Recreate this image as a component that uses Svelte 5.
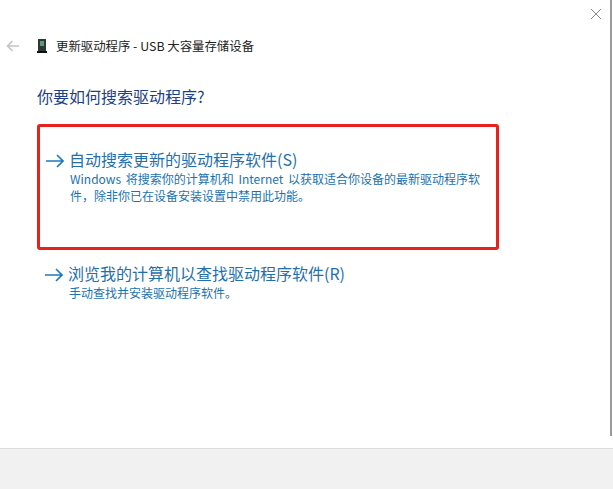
<script lang="ts">
	const options = [
		{
			title: '自动搜索更新的驱动程序软件(S)',
			desc: 'Windows 将搜索你的计算机和 Internet 以获取适合你设备的最新驱动程序软件\uFF0C除非你已在设备安装设置中禁用此功能。',
			active: true
		},
		{
			title: '浏览我的计算机以查找驱动程序软件(R)',
			desc: '手动查找并安装驱动程序软件。',
			active: false
		}
	];
</script>

<div class="dialog">
	<div class="main">
		<header class="titlebar">
			<svg class="back" width="14" height="12" viewBox="0 0 14 12" aria-hidden="true">
				<path d="M6.5 1 1.5 6l5 5M1.5 6H13" fill="none" stroke="#c4c4c4" stroke-width="1.6" />
			</svg>
			<svg class="usb" width="10" height="14" viewBox="0 0 10 14" aria-hidden="true">
				<rect x="1" y="0" width="8" height="12" fill="#2c3a33" />
				<rect x="3" y="2" width="4" height="5" fill="#5f9a78" />
				<rect x="0" y="12" width="10" height="2" fill="#111" />
			</svg>
			<span>更新驱动程序 - USB 大容量存储设备</span>
		</header>

		<h1>你要如何搜索驱动程序?</h1>

		<div class="options">
			{#each options as opt}
				<div class="option" class:active={opt.active}>
					<svg class="arrow" width="18" height="14" viewBox="0 0 18 14" aria-hidden="true">
						<path d="M11 1l6 6-6 6M17 7H0" fill="none" stroke="#1b78c4" stroke-width="1.6" />
					</svg>
					<div class="text">
						<div class="title">{opt.title}</div>
						<p>{opt.desc}</p>
					</div>
				</div>
			{/each}
		</div>
	</div>
	<footer></footer>

	<svg class="close" width="12" height="12" viewBox="0 0 12 12" aria-hidden="true">
		<path d="M1 1l10 10M11 1 1 11" fill="none" stroke="#8a8a8a" stroke-width="1" />
	</svg>
	<div class="edge"></div>
</div>

<style>
	:global(body) {
		margin: 0;
		background: #fff;
	}

	.dialog {
		position: relative;
		display: flex;
		flex-direction: column;
		width: 613px;
		height: 489px;
		overflow: hidden;
		font-family: 'Noto Sans CJK SC', 'Open Sans', sans-serif;
	}

	.main {
		flex: 1;
		padding-top: 37px;
	}

	.titlebar {
		display: flex;
		align-items: center;
		height: 17px;
		padding-left: 6px;
		font-size: 12.4px;
		color: #222;
	}

	.back {
		margin-right: 17px;
	}

	.usb {
		margin-right: 9px;
	}

	h1 {
		margin: 22px 0 0 37px;
		font-size: 16px;
		line-height: 40px;
		font-weight: 400;
		color: #1c3f86;
	}

	.options {
		display: flex;
		flex-direction: column;
		gap: 12px;
		margin: 8px 0 0 37px;
		width: 462px;
	}

	.option {
		display: flex;
		align-items: flex-start;
		box-sizing: border-box;
		padding: 0 13px 0 8px;
	}

	.option.active {
		height: 126px;
		padding: 21px 13px 0 6px;
		border: 3px solid #e8211c;
		border-radius: 3px;
	}

	.arrow {
		flex: none;
		margin: 6px 7px 0 0;
	}

	.title {
		font-size: 16px;
		line-height: 22px;
		color: #1f70ac;
		margin-left: -2px;
	}

	p {
		margin: 0 0 0 -1px;
		font-size: 12px;
		line-height: 17px;
		word-spacing: 2px;
		color: #1a72ae;
	}

	footer {
		flex: none;
		height: 40px;
		background: #f1f1f1;
		border-top: 1px solid #dcdcdc;
	}

	.close {
		position: absolute;
		top: 8px;
		left: 590px;
	}

	.edge {
		position: absolute;
		top: 0;
		right: 1px;
		width: 2px;
		height: 436px;
		background: #9a9a9a;
	}
</style>
